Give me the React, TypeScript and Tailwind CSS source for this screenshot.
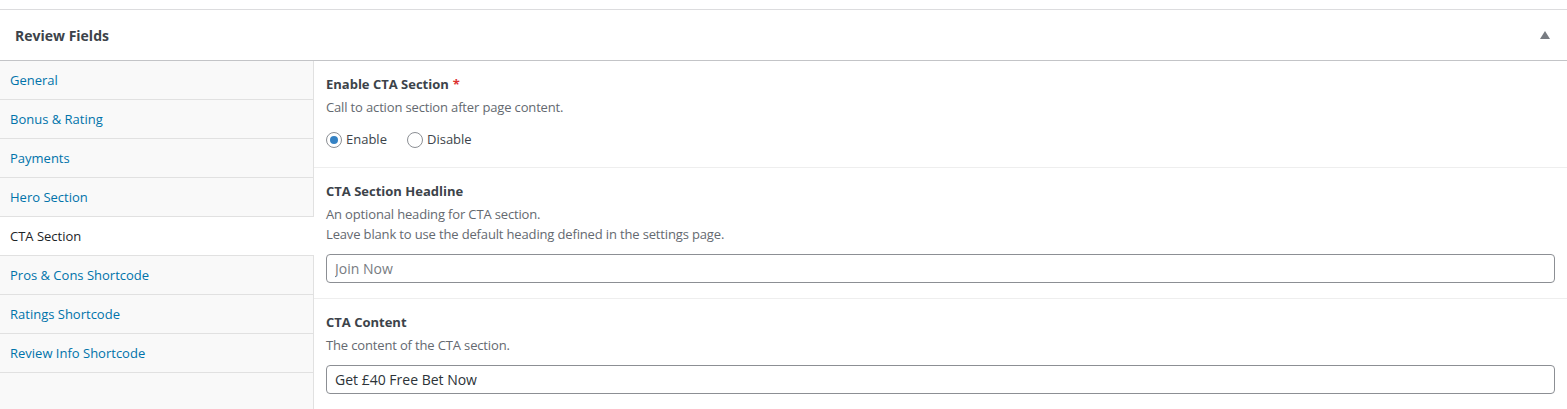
const tabs = [
  'General',
  'Bonus & Rating',
  'Payments',
  'Hero Section',
  'CTA Section',
  'Pros & Cons Shortcode',
  'Ratings Shortcode',
  'Review Info Shortcode',
];

function Field({ label, required = false, children, className = '' }: { label: string; required?: boolean; children: React.ReactNode; className?: string }) {
  return (
    <div className={`px-3 pt-[15px] ${className}`}>
      <div className="text-[13px] leading-4 font-bold text-[#3c434a]">
        {label}
        {required && <span className="text-[#dc3232] ml-1">*</span>}
      </div>
      <div className="mt-[5px]">{children}</div>
    </div>
  );
}

function Desc({ children }: { children: React.ReactNode }) {
  return <p className="text-[13px] leading-5 tracking-[-0.15px] text-[#646970]">{children}</p>;
}

function Radio({ label, checked = false }: { label: string; checked?: boolean }) {
  return (
    <label className="flex items-center gap-1 text-[13px] text-[#3c434a]">
      <span className="w-4 h-4 rounded-full border border-[#8c8f94] bg-white flex items-center justify-center">
        {checked && <span className="w-2 h-2 rounded-full bg-[#3582c4]" />}
      </span>
      {label}
    </label>
  );
}

export default function App() {
  return (
    <div className="w-[1567px] h-[409px] bg-white overflow-hidden" style={{ fontFamily: '"Open Sans", "Noto Sans", sans-serif' }}>
      <div className="h-[9px]" />
      <div className="border-t border-[#dcdcde]">
        {/* Header */}
        <div className="h-[51px] flex items-center justify-between pl-[15px] pr-[15px] border-b border-[#c3c4c7]">
          <h2 className="text-[14px] font-bold text-[#3c434a]">Review Fields</h2>
          <svg width="10" height="8" viewBox="0 0 10 8" className="mr-[2px]">
            <path d="M5 0 L10 8 L0 8 Z" fill="#787c82" />
          </svg>
        </div>

        <div className="flex">
          {/* Tabs */}
          <ul className="w-[314px] shrink-0 bg-[#f9f9f9] border-r border-[#e1e1e1] h-[348px]">
            {tabs.map(t => {
              const active = t === 'CTA Section';
              return (
                <li
                  key={t}
                  className={`h-[39px] flex items-center pt-px px-[10px] border-b border-[#e1e1e1] text-[13px] ${
                    active ? 'bg-white text-[#1d2327] -mr-px' : 'text-[#0073aa]'
                  }`}
                >
                  {t}
                </li>
              );
            })}
          </ul>

          {/* Fields */}
          <div className="flex-1">
            <Field label="Enable CTA Section" required className="h-[107px] border-b border-[#eeeeee]">
              <Desc>Call to action section after page content.</Desc>
              <div className="flex items-center gap-5 mt-[13px] h-5">
                <Radio label="Enable" checked />
                <Radio label="Disable" />
              </div>
            </Field>

            <Field label="CTA Section Headline" className="h-[131px] border-b border-[#eeeeee]">
              <Desc>An optional heading for CTA section.</Desc>
              <Desc>Leave blank to use the default heading defined in the settings page.</Desc>
              <input
                readOnly
                placeholder="Join Now"
                className="mt-[10px] w-full h-[29px] px-2 rounded border border-[#8c8f94] text-[14px] text-[#2c3338] placeholder:text-[#787c82] outline-none"
              />
            </Field>

            <Field label="CTA Content" className="pb-[15px]">
              <Desc>The content of the CTA section.</Desc>
              <input
                readOnly
                value="Get £40 Free Bet Now"
                className="mt-[10px] w-full h-[29px] px-2 rounded border border-[#8c8f94] text-[14px] text-[#2c3338] outline-none"
              />
            </Field>
          </div>
        </div>
      </div>
    </div>
  );
}
